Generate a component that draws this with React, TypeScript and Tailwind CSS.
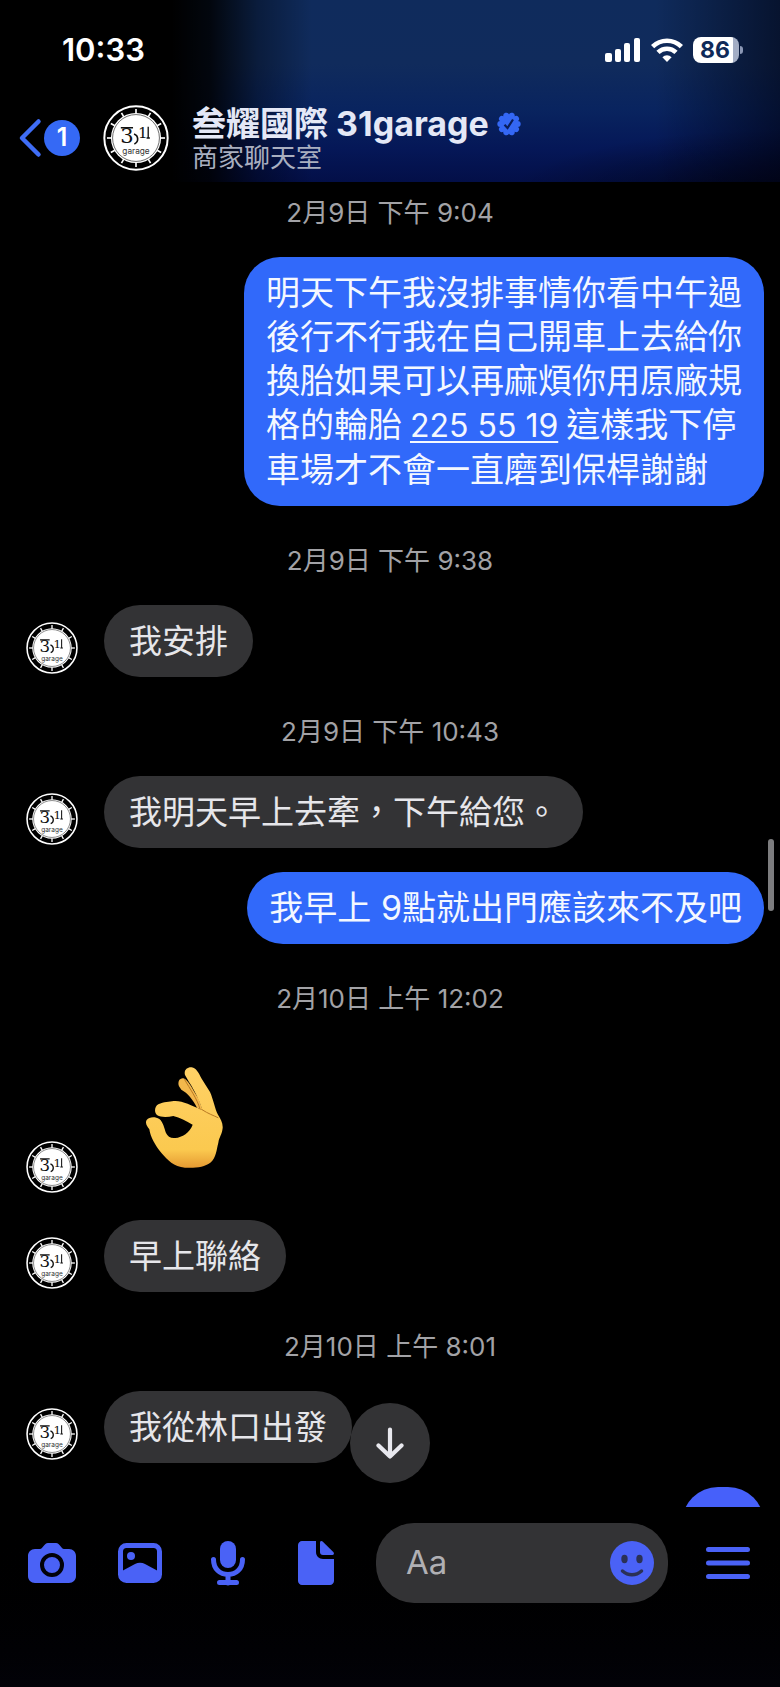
import React, { useState } from "react";

const TICKS = [0, 30, 60, 90, 120, 150, 180, 210, 240, 270, 300, 330];

function Logo({ className }: { className: string }) {
    return (
        <svg className={`shrink-0 ${className}`} viewBox="0 0 200 200" role="img" aria-label="31garage">
            <circle cx="100" cy="100" r="96" fill="#000" stroke="#fff" strokeWidth="6" />
            {TICKS.map((deg) => (
                <line key={deg} x1="100" y1="12" x2="100" y2="26" stroke="#fff" strokeWidth="5" transform={`rotate(${deg} 100 100)`} />
            ))}
            <circle cx="100" cy="100" r="76" fill="#fff" />
            <circle cx="100" cy="100" r="71" fill="none" stroke="#222" strokeWidth="2" />
            <text x="52" y="114" fontSize="64" fill="#111" fontFamily="DejaVu Serif, serif">3</text>
            <path d="M54 69h37M94 88c14 5 15 24 1 30" fill="none" stroke="#111" strokeWidth="5" />
            <text x="106" y="101" fontSize="46" fill="#111" fontFamily="DejaVu Serif, serif">1</text>
            <path d="M137 66v35M132 100h10" fill="none" stroke="#111" strokeWidth="4" />
            <text x="100" y="149" fontSize="25" fill="#333" textAnchor="middle" fontFamily="Inter, sans-serif">garage</text>
        </svg>
    );
}

function StatusBar() {
    return (
        <div className="flex h-[102px] items-center justify-between pr-[37px] pb-0.5 pl-[62px]">
            <span className="text-[31px] leading-10 font-semibold text-white">10:33</span>
            <div className="flex items-center gap-2.5">
                <svg className="h-6 w-9" viewBox="0 0 36 24" fill="#fff">
                    <rect x="0" y="15" width="7" height="9" rx="2" />
                    <rect x="10" y="11" width="6" height="13" rx="2" />
                    <rect x="19" y="5" width="6" height="19" rx="2" />
                    <rect x="29" y="0" width="6" height="24" rx="2" />
                </svg>
                <svg className="h-6 w-8" viewBox="0 0 32 24" fill="none" stroke="#fff" strokeWidth="4.6">
                    <path d="M1.6 8.6a20.6 20.6 0 0 1 28.8 0" />
                    <path d="M7 14.4a13 13 0 0 1 18 0" />
                    <path d="M16 24l-4.6-4.8a6.6 6.6 0 0 1 9.2 0z" fill="#fff" stroke="none" />
                </svg>
                <div className="flex items-center gap-px">
                    <div className="flex h-[26px] w-[46px] items-center justify-center rounded-lg bg-linear-to-r from-white from-86% to-[#a3adc4] to-86% pr-0.5 text-[23px] font-bold text-[#0f2a59]">
                        86
                    </div>
                    <div className="h-2 w-[3px] rounded-r-full bg-[#8b97b5]" />
                </div>
            </div>
        </div>
    );
}

function Header() {
    return (
        <header className="h-[182px] shrink-0 bg-[linear-gradient(to_right,#000_22%,rgba(0,0,0,0.85)_27%,rgba(0,0,0,0.35)_33%,transparent_40%,transparent_84%,rgba(0,0,10,0.55)_100%),radial-gradient(ellipse_at_100%_110%,rgba(0,0,0,0.6),transparent_25%),linear-gradient(to_bottom,#0f2b5c_0%,#102b5c_35%,#09245f_60%,#051757_82%,#030f48_100%)]">
            <StatusBar />
            <div className="flex items-center pl-[18px]">
                <button className="flex items-center gap-0.5" aria-label="返回">
                    <svg className="h-10 w-6" viewBox="0 0 24 40" fill="none" stroke="#3f6df6" strokeWidth="4.5" strokeLinecap="round" strokeLinejoin="round">
                        <path d="M20.500 3.500L4 20l16.500 16.500" />
                    </svg>
                    <span className="flex size-9 items-center justify-center rounded-full bg-[#3569f5] text-[25px] font-semibold text-white">1</span>
                </button>
                <Logo className="ml-[23px] size-[66px]" />
                <div className="ml-[23px] pt-1">
                    <div className="flex items-center gap-2 leading-9">
                        <h1 className="text-[34px] font-bold text-[#e4e8f6]">叁耀國際 31garage</h1>
                        <svg className="size-6" viewBox="0 0 24 24" role="img" aria-label="已驗證">
                            <g fill="#3467f4">
                                <circle cx="12" cy="12" r="9.500" />
                                {[18, 54, 90, 126, 162, 198, 234, 270, 306, 342].map((deg) => (
                                    <circle key={deg} cx="12" cy="3.300" r="3" transform={`rotate(${deg} 12 12)`} />
                                ))}
                            </g>
                            <path d="M7.500 12.800l3 3.200 5.500-8.500" fill="none" stroke="#0a1d5a" strokeWidth="2.200" />
                        </svg>
                    </div>
                    <p className="text-[26px] leading-8 text-[#a9afc0]">商家聊天室</p>
                </div>
            </div>
        </header>
    );
}

function DateLabel({ children, first = false }: { children: React.ReactNode; first?: boolean }) {
    return (
        <p className={`pb-[26px] text-center text-[26px] leading-9 text-[#a2a2a6] ${first ? "pt-[13px]" : "pt-[37px]"}`}>{children}</p>
    );
}

function Incoming({ children }: { children: React.ReactNode }) {
    return (
        <div className="flex items-end gap-[26px] pl-[26px]">
            <Logo className="mb-[3px] size-13" />
            {children}
        </div>
    );
}

function Bubble({ children, mine = false }: { children: React.ReactNode; mine?: boolean }) {
    return (
        <div
            className={`w-fit rounded-[36px] py-3.5 leading-11 whitespace-nowrap ${
                mine ? "mr-4 ml-auto bg-[#3169fa] px-[22px] text-[34px] text-[#f4f8ff]" : "bg-[#333335] px-[25px] text-[33px] text-[#e6e6ea]"
            }`}
        >
            {children}
        </div>
    );
}

function OkHand() {
    return (
        <svg className="mt-6 mb-7 ml-[42px] h-[101px] w-[77px]" viewBox="437 80 231 303" role="img" aria-label="OK">
            <defs>
                <linearGradient id="skin" x1="0" y1="0" x2="0" y2="1">
                    <stop offset="0" stopColor="#ffd166" />
                    <stop offset="0.82" stopColor="#fbc94f" />
                    <stop offset="1" stopColor="#e59a32" />
                </linearGradient>
            </defs>
            <path d="M536 138c-5-14 2-25 13-24 14 4 26 30 46 62l12 34-17-8c-12-24-28-44-47-54z" fill="#f3b84c" />
            <path
                d="M554 104c-4-14 6-24 20-23 14 2 20 16 30 34l25 40c10 22 15 52 24 68 8 14 15 24 14 40-2 20-10 26-13 44-6 22-6 44-24 60-18 13-44 17-76 15-34-3-52-22-70-43-20-24-34-50-37-72-8-10-13-20-8-28 8-10 26-10 38-3 12 10 15 28 20 42 5 10 14 17 28 15 20-2 44-16 52-40-20-10-38-22-58-26-18 4-38 4-48-2-11-8-8-28 3-33 16-8 34-8 46-10 26-2 50 12 86 27-8-28-24-60-40-84z"
                fill="url(#skin)"
            />
            <path d="M553 118c16 28 37 56 46 88M605 208c20 13 34 17 48 24" fill="none" stroke="#b97a24" strokeWidth="3" strokeLinecap="round" />
        </svg>
    );
}

function Messages() {
    return (
        <main className="relative min-h-0 flex-1 overflow-hidden">
            <DateLabel first>2月9日 下午 9:04</DateLabel>
            <Bubble mine>
                明天下午我沒排事情你看中午過
                <br />
                後行不行我在自己開車上去給你
                <br />
                換胎如果可以再麻煩你用原廠規
                <br />
                格的輪胎
                <a href="tel:2255519" className="mx-2 text-[32px] underline decoration-2 underline-offset-4">225 55 19</a>
                這樣我下停
                <br />
                車場才不會一直磨到保桿謝謝
            </Bubble>
            <DateLabel>2月9日 下午 9:38</DateLabel>
            <Incoming>
                <Bubble>我安排</Bubble>
            </Incoming>
            <DateLabel>2月9日 下午 10:43</DateLabel>
            <Incoming>
                <Bubble>我明天早上去牽，下午給您。</Bubble>
            </Incoming>
            <div className="mt-6">
                <Bubble mine>我早上 9點就出門應該來不及吧</Bubble>
            </div>
            <DateLabel>2月10日 上午 12:02</DateLabel>
            <Incoming>
                <OkHand />
            </Incoming>
            <div className="mt-6">
                <Incoming>
                    <Bubble>早上聯絡</Bubble>
                </Incoming>
            </div>
            <DateLabel>2月10日 上午 8:01</DateLabel>
            <Incoming>
                <Bubble>我從林口出發</Bubble>
            </Incoming>
            {/* Next outgoing bubble, mostly scrolled under the composer */}
            <div className="mt-6 mr-4 ml-auto h-[72px] w-[82px] rounded-[36px] bg-[#4660fa]" />

            {/* Scroll thumb and jump-to-latest button float over the thread */}
            <div className="absolute top-[657px] right-1.5 h-[72px] w-1.5 rounded-full bg-[#7d7d7f]" />
            <button className="absolute bottom-6 left-1/2 flex size-20 -translate-x-1/2 items-center justify-center rounded-full bg-[#333335]" aria-label="捲動到最新訊息">
                <svg className="h-8 w-7" viewBox="0 0 28 32" fill="none" stroke="#e8e8ee" strokeWidth="4.2" strokeLinecap="round" strokeLinejoin="round">
                    <path d="M14 2.500v27M2.500 18.500L14 29.500 25.500 18.500" />
                </svg>
            </button>
        </main>
    );
}

function Composer() {
    const [text, setText] = useState("");

    return (
        <footer className="flex h-[180px] shrink-0 items-start gap-9 bg-linear-to-b from-black to-[#020208] px-7 pt-4 text-[#4a62f6]">
            <div className="flex h-20 items-center gap-10">
                <button aria-label="相機">
                    <svg className="size-12" viewBox="0 0 48 48" fill="currentColor">
                        <path d="M7 10h5c3 0 4-6 8-6h8c4 0 5 6 8 6h5c4 0 7 3 7 7v20c0 4-3 7-7 7H7c-4 0-7-3-7-7V17c0-4 3-7 7-7z" />
                        <circle cx="24" cy="26" r="10" fill="none" stroke="#02020a" strokeWidth="4" />
                    </svg>
                </button>
                <button aria-label="相片">
                    <svg className="size-12" viewBox="0 0 48 48">
                        <rect x="4.500" y="6.500" width="39" height="35" rx="6" fill="none" stroke="currentColor" strokeWidth="5" />
                        <path d="M6 32l13-7c3-1.600 7-1.600 10 0l13 7v9H6z" fill="currentColor" />
                        <circle cx="15" cy="17" r="4" fill="currentColor" />
                    </svg>
                </button>
                <button aria-label="語音">
                    <svg className="size-12" viewBox="0 0 48 48" fill="none" stroke="currentColor" strokeWidth="5" strokeLinecap="round">
                        <rect x="16" y="2" width="16" height="27" rx="8" fill="currentColor" stroke="none" />
                        <path d="M9.500 20.500C9.500 30 16 35.500 24 35.500S38.500 30 38.500 20.500M24 36v8M15.500 43.500h17" />
                    </svg>
                </button>
                <button aria-label="檔案">
                    <svg className="size-12" viewBox="0 0 48 48" fill="currentColor">
                        <path d="M10 2h14v11c0 4 3 7 7 7h11v22c0 2-2 4-4 4H10c-2 0-4-2-4-4V6c0-2 2-4 4-4z" />
                        <path d="M28 3.500c0-1.500 1.500-2 2.600-1L41.300 13c1.200 1.300.7 3-1 3H31c-2 0-3-1-3-3z" />
                    </svg>
                </button>
            </div>
            <div className="flex h-20 min-w-0 flex-1 items-center rounded-[38px] bg-[#333335] pr-3.5 pl-[30px]">
                <input
                    className="min-w-0 flex-1 bg-transparent text-[33px] text-white outline-none placeholder:text-[#b0b0b4]"
                    placeholder="Aa"
                    aria-label="訊息"
                    value={text}
                    onChange={(e) => setText(e.target.value)}
                />
                <button className="shrink-0" aria-label="表情符號">
                    <svg className="size-11" viewBox="0 0 44 44">
                        <circle cx="22" cy="22" r="22" fill="currentColor" />
                        <ellipse cx="14.500" cy="18" rx="3.200" ry="4.200" fill="#2b3156" />
                        <ellipse cx="29.500" cy="18" rx="3.200" ry="4.200" fill="#2b3156" />
                        <path d="M12.500 30c5.500 5 13.500 5 19 0" fill="none" stroke="#2b3156" strokeWidth="3.500" strokeLinecap="round" />
                    </svg>
                </button>
            </div>
            <button className="flex h-20 items-center" aria-label="選單">
                <svg className="size-12" viewBox="0 0 48 48" stroke="currentColor" strokeWidth="5" strokeLinecap="round">
                    <path d="M4.500 10.500h39M4.500 24h39M4.500 37.500h39" />
                </svg>
            </button>
        </footer>
    );
}

export default function App() {
    return (
        <div lang="zh-Hant" className="flex h-screen flex-col overflow-hidden bg-black font-['Inter','Noto_Sans_CJK_TC',sans-serif]">
            <Header />
            <Messages />
            <Composer />
        </div>
    );
}
